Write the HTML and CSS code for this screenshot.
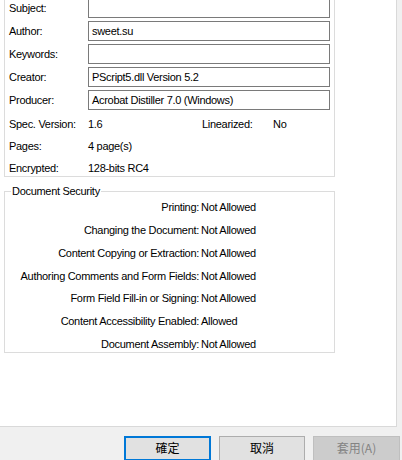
FILE: index.html
```html
<!DOCTYPE html>
<html>
<head>
<meta charset="utf-8">
<link rel="stylesheet" href="styles.css">
</head>
<body>
<div class="dialog">
  <div class="tabpage">
    <div class="group info">
      <div class="fields">
        <div class="frow"><span class="lbl">Subject:</span><div class="tbox"></div></div>
        <div class="frow"><span class="lbl">Author:</span><div class="tbox">sweet.su</div></div>
        <div class="frow"><span class="lbl">Keywords:</span><div class="tbox"></div></div>
        <div class="frow"><span class="lbl">Creator:</span><div class="tbox">PScript5.dll Version 5.2</div></div>
        <div class="frow"><span class="lbl">Producer:</span><div class="tbox">Acrobat Distiller 7.0 (Windows)</div></div>
      </div>
      <div class="props">
        <span class="lbl">Spec. Version:</span><span class="val">1.6</span><span class="lbl2">Linearized:</span><span class="val">No</span>
        <span class="lbl">Pages:</span><span class="val">4 page(s)</span><span></span><span></span>
        <span class="lbl">Encrypted:</span><span class="val">128-bits RC4</span><span></span><span></span>
      </div>
    </div>
    <fieldset class="group security">
      <legend>Document Security</legend>
      <div class="perms">
        <span class="plbl">Printing:</span><span class="pval">Not Allowed</span>
        <span class="plbl">Changing the Document:</span><span class="pval">Not Allowed</span>
        <span class="plbl">Content Copying or Extraction:</span><span class="pval">Not Allowed</span>
        <span class="plbl">Authoring Comments and Form Fields:</span><span class="pval">Not Allowed</span>
        <span class="plbl">Form Field Fill-in or Signing:</span><span class="pval">Not Allowed</span>
        <span class="plbl">Content Accessibility Enabled:</span><span class="pval">Allowed</span>
        <span class="plbl">Document Assembly:</span><span class="pval">Not Allowed</span>
      </div>
    </fieldset>
  </div>
  <div class="buttons">
    <button class="btn default">確定</button>
    <button class="btn cancel">取消</button>
    <button class="btn disabled" disabled>套用(A)</button>
  </div>
</div>
</body>
</html>
```
FILE: styles.css
```css
html, body {
  margin: 0;
  padding: 0;
  background: #f0f0f0;
  overflow: hidden;
}
body {
  width: 402px;
  height: 460px;
  font-family: "Liberation Sans", Arial, sans-serif;
  font-size: 11px;
  letter-spacing: -0.3px;
  color: #000;
}
.dialog {
  display: flex;
  flex-direction: column;
}
.tabpage {
  box-sizing: border-box;
  width: 397px;
  height: 427px;
  background: #fff;
  border-right: 1px solid #d9d9d9;
  border-bottom: 1px solid #d9d9d9;
  display: flex;
  flex-direction: column;
  padding-left: 4px;
}
.group {
  box-sizing: border-box;
  width: 331px;
  border: 1px solid #dcdcdc;
}
.info {
  border-top: none;
  padding: 0 0 0 4px;
}
.fields {
  display: flex;
  flex-direction: column;
  gap: 3px;
  margin-top: -2px;
}
.frow {
  display: flex;
  align-items: center;
  height: 20px;
}
.lbl {
  width: 79px;
  flex: none;
  line-height: 14px;
}
.tbox {
  box-sizing: border-box;
  width: 242px;
  height: 20px;
  border: 1px solid #7a7a7a;
  padding: 0 3px;
  line-height: 18px;
  white-space: nowrap;
  overflow: hidden;
}
.props {
  display: grid;
  grid-template-columns: 79px 114px 71px auto;
  grid-auto-rows: 16px;
  row-gap: 6px;
  margin-top: 6px;
  align-items: center;
  line-height: 14px;
}
.security {
  margin: 7px 0 0 0;
  padding: 1px 0 0 0;
  min-width: 0;
}
.security legend {
  margin-left: 6px;
  padding: 0 1px;
  line-height: 14px;
}
.perms {
  display: grid;
  grid-template-columns: 194px auto;
  grid-auto-rows: 16px;
  row-gap: 6.85px;
  column-gap: 2px;
  align-items: center;
  line-height: 14px;
}
.plbl {
  text-align: right;
  white-space: nowrap;
}
.pval {
  white-space: nowrap;
}
.buttons {
  display: flex;
  justify-content: flex-end;
  gap: 8px;
  padding: 9px 2px 0 0;
}
.btn {
  box-sizing: border-box;
  height: 25px;
  width: 86px;
  margin: 0;
  padding: 0 0 1px 0;
  font-family: "Noto Sans CJK TC", "Liberation Sans", sans-serif;
  font-size: 12px;
  line-height: 16px;
  letter-spacing: 0;
  background: #e1e1e1;
  border: 1px solid #adadad;
  color: #000;
}
.default {
  width: 87px;
  border: 2px solid #0078d7;
}
.disabled {
  width: 87px;
  background: #cccccc;
  border-color: #bfbfbf;
  color: #838383;
}
```
